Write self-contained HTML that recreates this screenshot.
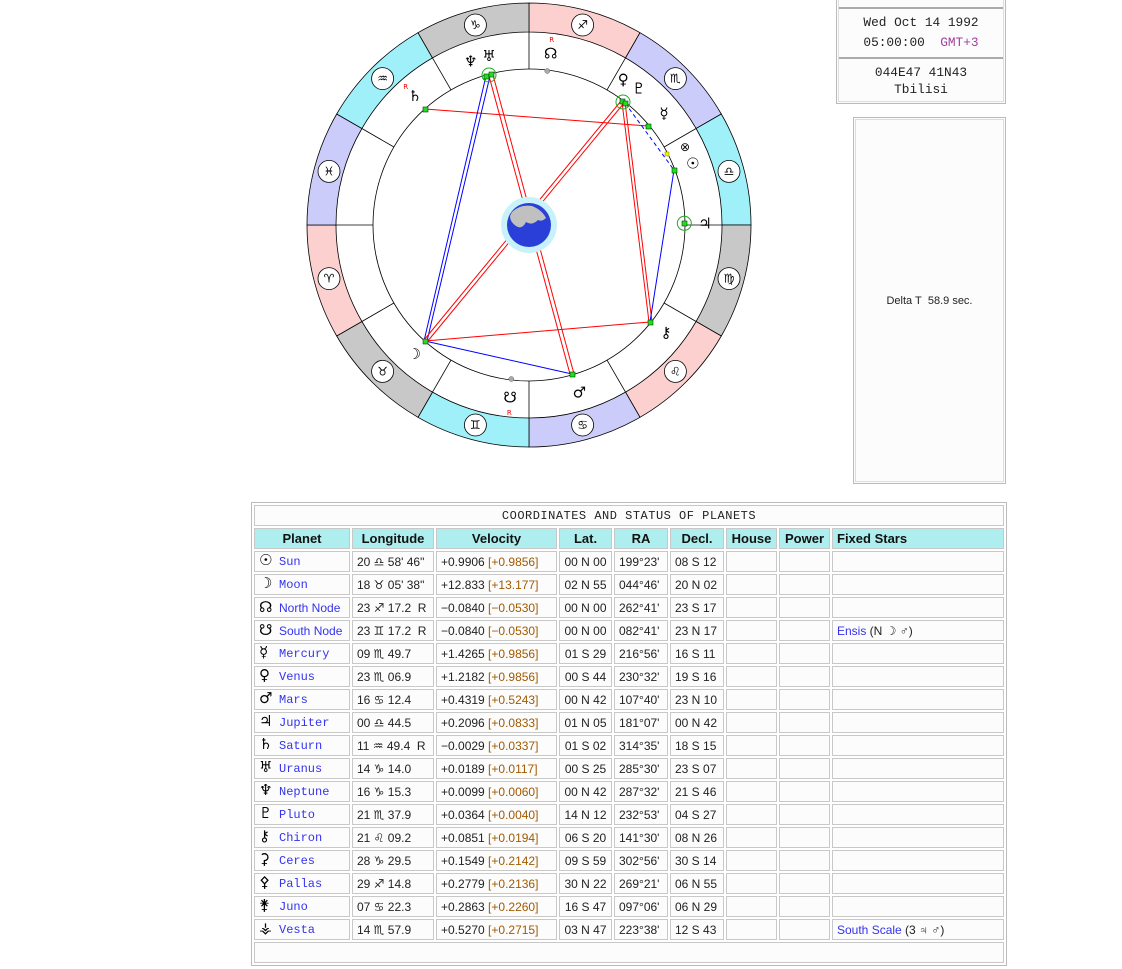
<!DOCTYPE html>
<html><head><meta charset="utf-8">
<style>
body{margin:0;background:#fff;width:1122px;height:969px;position:relative;overflow:hidden;font-family:"Liberation Sans","DejaVu Sans",sans-serif;}
#wheel{position:absolute;left:0;top:0}
.box1{position:absolute;left:836px;top:-4px;width:168px;height:106px;border:1px solid #bbb;outline:1px solid #ddd;outline-offset:-3px;background:#fcfcfc;font-family:"Liberation Mono",monospace;font-size:12.8px;color:#222;text-align:center}
.box1 .hr{position:absolute;left:2px;right:2px;height:2px;background:#aaa}
.box2{position:absolute;left:853px;top:117px;width:151px;height:365px;border:1px solid #bbb;outline:1px solid #ddd;outline-offset:-3px;background:#fcfcfc;font-size:11px;color:#222;text-align:center}
table{position:absolute;left:251px;top:502px;border:1px solid #bbb;border-spacing:2px;background:#fff;font-size:12px;width:756px}
td,th{border:1px solid #c8c8c8;height:19px;padding:0 4px;background:#fcfcfc;white-space:nowrap;color:#222}
th{background:#afeeee;font-size:13px;font-weight:bold;color:#111}
.t{font-family:"Liberation Mono",monospace;font-size:12px;text-align:center;letter-spacing:0.5px;height:19px}
.n{color:#3333ee;font-family:"Liberation Mono",monospace}
.ns{color:#3333ee}
.b{color:#a05a00}
.g{display:inline-block;width:20px;font-size:15px;font-weight:bold;color:#000;line-height:12px;font-family:"DejaVu Sans",sans-serif}
.c{text-align:center}
</style></head><body>
<svg id="wheel" width="760" height="460" viewBox="0 0 760 460" font-family="DejaVu Sans,sans-serif">
<g stroke="#000" stroke-width="0.8">
<path d="M529,3 A222,222 0 0 1 640,32.7 L625.5,57.9 A193,193 0 0 0 529,32Z" fill="#fdd0d0"/>
<path d="M640,32.7 A222,222 0 0 1 721.3,114 L696.1,128.5 A193,193 0 0 0 625.5,57.9Z" fill="#ccccfa"/>
<path d="M721.3,114 A222,222 0 0 1 751,225 L722,225 A193,193 0 0 0 696.1,128.5Z" fill="#a0f0fa"/>
<path d="M751,225 A222,222 0 0 1 721.3,336 L696.1,321.5 A193,193 0 0 0 722,225Z" fill="#c8c8c8"/>
<path d="M721.3,336 A222,222 0 0 1 640,417.3 L625.5,392.1 A193,193 0 0 0 696.1,321.5Z" fill="#fdd0d0"/>
<path d="M640,417.3 A222,222 0 0 1 529,447 L529,418 A193,193 0 0 0 625.5,392.1Z" fill="#ccccfa"/>
<path d="M529,447 A222,222 0 0 1 418,417.3 L432.5,392.1 A193,193 0 0 0 529,418Z" fill="#a0f0fa"/>
<path d="M418,417.3 A222,222 0 0 1 336.7,336 L361.9,321.5 A193,193 0 0 0 432.5,392.1Z" fill="#c8c8c8"/>
<path d="M336.7,336 A222,222 0 0 1 307,225 L336,225 A193,193 0 0 0 361.9,321.5Z" fill="#fdd0d0"/>
<path d="M307,225 A222,222 0 0 1 336.7,114 L361.9,128.5 A193,193 0 0 0 336,225Z" fill="#ccccfa"/>
<path d="M336.7,114 A222,222 0 0 1 418,32.7 L432.5,57.9 A193,193 0 0 0 361.9,128.5Z" fill="#a0f0fa"/>
<path d="M418,32.7 A222,222 0 0 1 529,3 L529,32 A193,193 0 0 0 432.5,57.9Z" fill="#c8c8c8"/>
</g>
<circle cx="529" cy="225" r="156" fill="none" stroke="#000" stroke-width="0.8"/>
<g stroke="#000" stroke-width="0.8">
<line x1="529" y1="32" x2="529" y2="69"/><line x1="625.5" y1="57.9" x2="607" y2="89.9"/>
<line x1="696.1" y1="128.5" x2="664.1" y2="147"/><line x1="722" y1="225" x2="685" y2="225"/>
<line x1="696.1" y1="321.5" x2="664.1" y2="303"/><line x1="625.5" y1="392.1" x2="607" y2="360.1"/>
<line x1="529" y1="418" x2="529" y2="381"/><line x1="432.5" y1="392.1" x2="451" y2="360.1"/>
<line x1="361.9" y1="321.5" x2="393.9" y2="303"/><line x1="336" y1="225" x2="373" y2="225"/>
<line x1="361.9" y1="128.5" x2="393.9" y2="147"/><line x1="432.5" y1="57.9" x2="451" y2="89.9"/>
</g>
<g fill="#fff" stroke="#000" stroke-width="0.8">
<circle cx="582.6" cy="25" r="11"/><circle cx="675.4" cy="78.6" r="11"/><circle cx="729" cy="171.4" r="11"/>
<circle cx="729" cy="278.6" r="11"/><circle cx="675.4" cy="371.4" r="11"/><circle cx="582.6" cy="425" r="11"/>
<circle cx="475.4" cy="425" r="11"/><circle cx="382.6" cy="371.4" r="11"/><circle cx="329" cy="278.6" r="11"/>
<circle cx="329" cy="171.4" r="11"/><circle cx="382.6" cy="78.6" r="11"/><circle cx="475.4" cy="25" r="11"/>
</g>
<g font-size="12" text-anchor="middle" dominant-baseline="central" fill="#000">
<text x="582.6" y="25">♐</text><text x="675.4" y="78.6">♏</text><text x="729" y="171.4">♎</text>
<text x="729" y="278.6">♍</text><text x="675.4" y="371.4">♌</text><text x="582.6" y="425">♋</text>
<text x="475.4" y="425">♊</text><text x="382.6" y="371.4">♉</text><text x="329" y="278.6">♈</text>
<text x="329" y="171.4">♓</text><text x="382.6" y="78.6">♒</text><text x="475.4" y="25">♑</text>
</g>
<g fill="none" stroke-width="1">
<line x1="425" y1="109" x2="648" y2="126" stroke="#f00"/>
<line x1="486" y1="76" x2="424" y2="341" stroke="#00f"/><line x1="490" y1="76" x2="427" y2="341" stroke="#00f"/>
<line x1="489" y1="76" x2="570" y2="374" stroke="#f00"/><line x1="493" y1="75" x2="574" y2="374" stroke="#f00"/>
<line x1="621" y1="101" x2="424" y2="340" stroke="#f00"/><line x1="624" y1="103" x2="427" y2="342" stroke="#f00"/>
<line x1="622" y1="102" x2="649" y2="322" stroke="#f00"/><line x1="625" y1="102" x2="652" y2="322" stroke="#f00"/>
<line x1="625" y1="103" x2="674" y2="170" stroke="#00f" stroke-dasharray="4,3"/>
<line x1="674" y1="170" x2="650" y2="322" stroke="#00f"/>
<line x1="425" y1="341" x2="650" y2="322" stroke="#f00"/>
<line x1="425" y1="341" x2="572" y2="374" stroke="#00f"/>
</g>
<circle cx="529" cy="225" r="28" fill="#c8f2fa"/>
<circle cx="529" cy="225" r="22" fill="#2a3fd8"/>
<path d="M512,212 q8,-8 20,-6 q10,4 14,12 q-4,4 -8,2 q-6,6 -12,2 q-4,8 -10,4 q-6,-4 -6,-10z" fill="#c0c0c0"/>
<g fill="none" stroke="#2a2" stroke-width="1"><circle cx="489" cy="75" r="7"/><circle cx="623" cy="102" r="7"/><circle cx="684.3" cy="223.3" r="7"/></g>
<g fill="#2d2" stroke="#040" stroke-width="0.6">
<rect x="423" y="107" width="5" height="5"/><rect x="484" y="74" width="5" height="5"/><rect x="489" y="72" width="5" height="5"/>
<rect x="620" y="99" width="5" height="5"/><rect x="623" y="101" width="5" height="5"/><rect x="646" y="124" width="5" height="5"/>
<rect x="672" y="168" width="5" height="5"/><rect x="682" y="221" width="5" height="5"/><rect x="648" y="320" width="5" height="5"/>
<rect x="570" y="372" width="5" height="5"/><rect x="423" y="339" width="5" height="5"/>
</g>
<rect x="665" y="152" width="4" height="4" fill="#ee0" stroke="#880" stroke-width="0.5"/>
<circle cx="547.3" cy="71" r="2.5" fill="#aaa" stroke="#666" stroke-width="0.5"/>
<circle cx="511.3" cy="379" r="2.5" fill="#aaa" stroke="#666" stroke-width="0.5"/>
<g font-size="15" font-weight="bold" text-anchor="middle" dominant-baseline="central" fill="#000">
<text x="415" y="96">♄</text><text x="470.7" y="61.7">♆</text><text x="489" y="56">♅</text>
<text x="550.7" y="53.3">☊</text><text x="623.3" y="79.3">♀</text><text x="639" y="88.3">♇</text>
<text x="664" y="113.3">☿</text><text x="685" y="147" font-size="12" font-weight="normal">⊗</text><text x="692.7" y="163.7">☉</text>
<text x="705" y="223.3">♃</text><text x="666" y="332.3">⚷</text><text x="579.3" y="392.7">♂</text>
<text x="510" y="397.3">☋</text><text x="414.3" y="354">☽</text>
</g>
<g font-size="7" fill="#e00" text-anchor="middle"><text x="405.7" y="89">R</text><text x="551.7" y="42">R</text><text x="509.3" y="415">R</text></g>
</svg>

<div class="box1">
<div class="hr" style="top:10px"></div>
<div style="position:absolute;top:18px;width:100%">Wed Oct 14 1992</div>
<div style="position:absolute;top:38px;width:100%">05:00:00&nbsp;&nbsp;<span style="color:#a040a0">GMT+3</span></div>
<div class="hr" style="top:60px"></div>
<div style="position:absolute;top:68px;width:100%">044E47 41N43</div>
<div style="position:absolute;top:85px;width:100%">Tbilisi</div>
</div>
<div class="box2"><div style="position:absolute;top:177px;width:100%">Delta T&nbsp; 58.9 sec.</div></div>

<table>
<tr><td colspan="9" class="t">COORDINATES AND STATUS OF PLANETS</td></tr>
<tr><th style="width:86px">Planet</th><th style="width:72px">Longitude</th><th style="width:111px">Velocity</th><th style="width:43px">Lat.</th><th style="width:44px">RA</th><th style="width:44px">Decl.</th><th style="width:41px">House</th><th style="width:41px">Power</th><th style="text-align:left">Fixed Stars</th></tr>
<tr><td><span class="g">☉</span><span class="n">Sun</span></td><td>20 ♎ 58' 46"</td><td>+0.9906 <span class="b">[+0.9856]</span></td><td class="c">00 N 00</td><td>199°23'</td><td>08 S 12</td><td></td><td></td><td></td></tr>
<tr><td><span class="g">☽</span><span class="n">Moon</span></td><td>18 ♉ 05' 38"</td><td>+12.833 <span class="b">[+13.177]</span></td><td class="c">02 N 55</td><td>044°46'</td><td>20 N 02</td><td></td><td></td><td></td></tr>
<tr><td><span class="g">☊</span><span class="ns">North Node</span></td><td>23 ♐ 17.2 &nbsp;R</td><td>−0.0840 <span class="b">[−0.0530]</span></td><td class="c">00 N 00</td><td>262°41'</td><td>23 S 17</td><td></td><td></td><td></td></tr>
<tr><td><span class="g">☋</span><span class="ns">South Node</span></td><td>23 ♊ 17.2 &nbsp;R</td><td>−0.0840 <span class="b">[−0.0530]</span></td><td class="c">00 N 00</td><td>082°41'</td><td>23 N 17</td><td></td><td></td><td><span class="ns">Ensis</span> (N ☽ ♂)</td></tr>
<tr><td><span class="g">☿</span><span class="n">Mercury</span></td><td>09 ♏ 49.7</td><td>+1.4265 <span class="b">[+0.9856]</span></td><td class="c">01 S 29</td><td>216°56'</td><td>16 S 11</td><td></td><td></td><td></td></tr>
<tr><td><span class="g">♀</span><span class="n">Venus</span></td><td>23 ♏ 06.9</td><td>+1.2182 <span class="b">[+0.9856]</span></td><td class="c">00 S 44</td><td>230°32'</td><td>19 S 16</td><td></td><td></td><td></td></tr>
<tr><td><span class="g">♂</span><span class="n">Mars</span></td><td>16 ♋ 12.4</td><td>+0.4319 <span class="b">[+0.5243]</span></td><td class="c">00 N 42</td><td>107°40'</td><td>23 N 10</td><td></td><td></td><td></td></tr>
<tr><td><span class="g">♃</span><span class="n">Jupiter</span></td><td>00 ♎ 44.5</td><td>+0.2096 <span class="b">[+0.0833]</span></td><td class="c">01 N 05</td><td>181°07'</td><td>00 N 42</td><td></td><td></td><td></td></tr>
<tr><td><span class="g">♄</span><span class="n">Saturn</span></td><td>11 ♒ 49.4 &nbsp;R</td><td>−0.0029 <span class="b">[+0.0337]</span></td><td class="c">01 S 02</td><td>314°35'</td><td>18 S 15</td><td></td><td></td><td></td></tr>
<tr><td><span class="g">♅</span><span class="n">Uranus</span></td><td>14 ♑ 14.0</td><td>+0.0189 <span class="b">[+0.0117]</span></td><td class="c">00 S 25</td><td>285°30'</td><td>23 S 07</td><td></td><td></td><td></td></tr>
<tr><td><span class="g">♆</span><span class="n">Neptune</span></td><td>16 ♑ 15.3</td><td>+0.0099 <span class="b">[+0.0060]</span></td><td class="c">00 N 42</td><td>287°32'</td><td>21 S 46</td><td></td><td></td><td></td></tr>
<tr><td><span class="g">♇</span><span class="n">Pluto</span></td><td>21 ♏ 37.9</td><td>+0.0364 <span class="b">[+0.0040]</span></td><td class="c">14 N 12</td><td>232°53'</td><td>04 S 27</td><td></td><td></td><td></td></tr>
<tr><td><span class="g">⚷</span><span class="n">Chiron</span></td><td>21 ♌ 09.2</td><td>+0.0851 <span class="b">[+0.0194]</span></td><td class="c">06 S 20</td><td>141°30'</td><td>08 N 26</td><td></td><td></td><td></td></tr>
<tr><td><span class="g">⚳</span><span class="n">Ceres</span></td><td>28 ♑ 29.5</td><td>+0.1549 <span class="b">[+0.2142]</span></td><td class="c">09 S 59</td><td>302°56'</td><td>30 S 14</td><td></td><td></td><td></td></tr>
<tr><td><span class="g">⚴</span><span class="n">Pallas</span></td><td>29 ♐ 14.8</td><td>+0.2779 <span class="b">[+0.2136]</span></td><td class="c">30 N 22</td><td>269°21'</td><td>06 N 55</td><td></td><td></td><td></td></tr>
<tr><td><span class="g">⚵</span><span class="n">Juno</span></td><td>07 ♋ 22.3</td><td>+0.2863 <span class="b">[+0.2260]</span></td><td class="c">16 S 47</td><td>097°06'</td><td>06 N 29</td><td></td><td></td><td></td></tr>
<tr><td><span class="g">⚶</span><span class="n">Vesta</span></td><td>14 ♏ 57.9</td><td>+0.5270 <span class="b">[+0.2715]</span></td><td class="c">03 N 47</td><td>223°38'</td><td>12 S 43</td><td></td><td></td><td><span class="ns">South Scale</span> (3 ♃ ♂)</td></tr>
<tr><td colspan="9" style="height:19px"></td></tr>
</table>
</body></html>
